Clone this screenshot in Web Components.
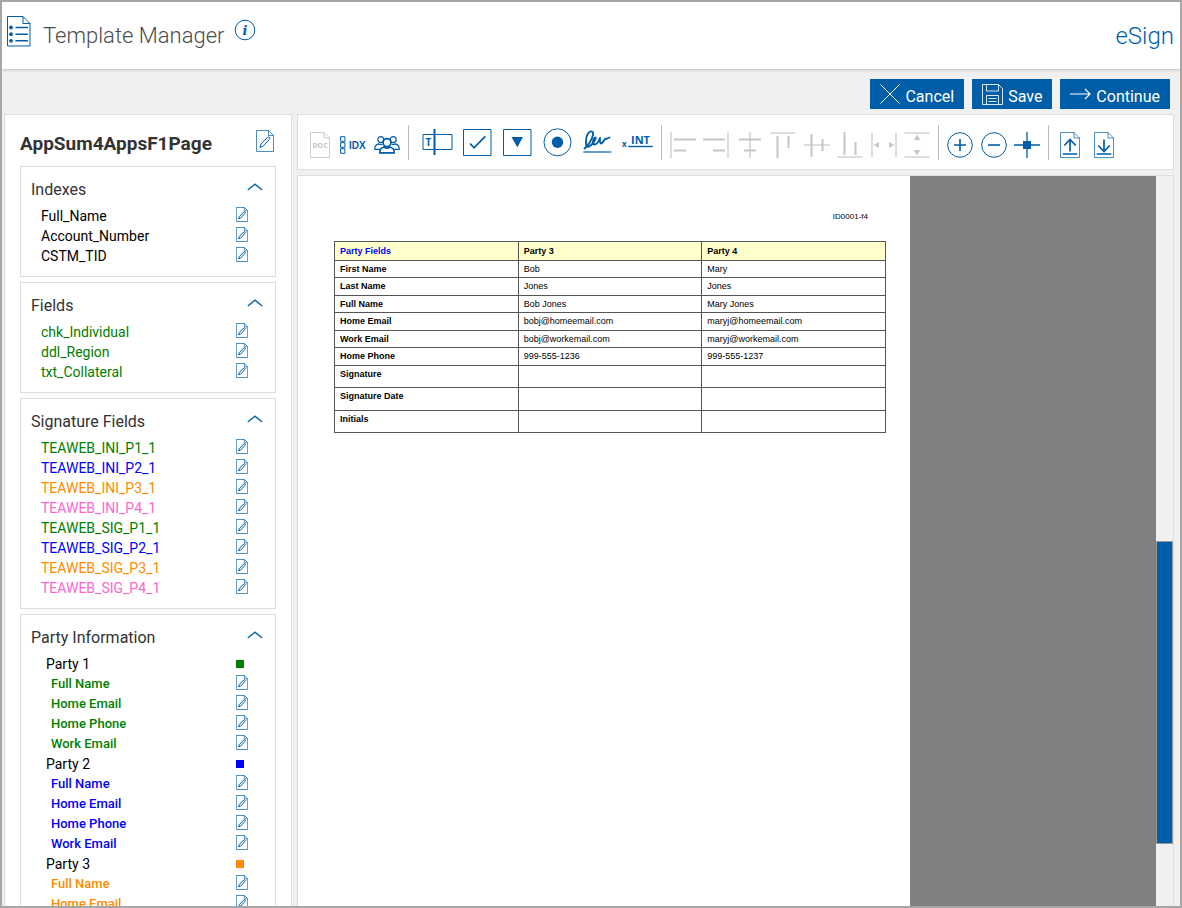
<!DOCTYPE html>
<html lang="en">
<head>
<meta charset="utf-8">
<title>Template Manager</title>
<style>
  body {
    margin: 0;
    font-family: Roboto, "Liberation Sans", sans-serif;
    font-size: 14px;
    color: #000;
  }
</style>
</head>
<body>
<es-app></es-app>

<script>
const BLUE = '#005da8'

// Page with a folded corner, shared by several icons.
const page = (x, y, w, h, f) => `<path d="M${x} ${y}h${w - f}l${f} ${f}v${h - f}h-${w}z M${x + w - f} ${y}v${f}h${f}"/>`

/**
 * Icons as [width, height, svg content].
 */
const icons = {
  list: [24, 31, `${page(0.5, 0.5, 22.5, 29.5, 7)}<path stroke-width="1.6" d="M8.5 11.5h12.5M8.5 18.2h12.5M8.5 24.8h12.5"/><g fill="currentColor" stroke="none"><circle cx="4" cy="11.5" r="1.9"/><circle cx="4" cy="18.2" r="1.9"/><circle cx="4" cy="24.8" r="1.9"/></g>`],
  info: [22, 22, '<circle cx="11" cy="11" r="9.8"/><text x="11" y="16" text-anchor="middle" style="font-family: DejaVu Serif, serif" font-style="italic" font-weight="700" font-size="13">i</text>'],
  edit: [18, 22, `<g stroke-opacity=".7">${page(0.5, 0.5, 17, 21, 5)}</g><path d="M4 17.5l1-3.500 6.500-6.700q1.200-.8 2 0t0 2l-6.500 7z"/>`],
  chevron: [16, 8, '<path stroke-width="1.3" d="M.8 7L8 1.200 15.200 7"/>'],
  cancel: [20, 20, '<path d="M.5 .5l19 19M19.500 .5l-19 19"/>'],
  save: [21, 21, '<path d="M.5 .5h16l4 4v16h-20z M4.500 .5v6.500h12v-6.500 M4.500 20v-8.500h12v8.500 M6.500 14.500h8M6.500 17.500h8" opacity=".85"/>'],
  arrow: [21, 12, '<path d="M0 6h20M15 1l5 5-5 5" stroke-width="1.2"/>'],

  doc: [26, 26, `<g stroke="#ccc">${page(3.5, 0.5, 19, 25, 5.5)}</g><text x="13" y="16" text-anchor="middle" style="fill: #c4c4c4" font-size="7" font-weight="700">DOC</text>`],
  idx: [26, 26, '<path d="M.6 4.700h4.300v4.600h-4.300z M.6 10.700h4.300v4.600h-4.300z M.6 16.700h4.300v4.600h-4.300z"/><text x="9" y="17" style="font-family: Liberation Sans, sans-serif" font-size="10" font-weight="700">IDX</text>'],
  group: [26, 26, '<g stroke-width="1.200"><circle cx="6.800" cy="7.600" r="3"/><circle cx="19.200" cy="7.600" r="3"/><path d="M6 17.300H.7c0-3.500 1.300-4.800 4-5.500 1 .8 2.500 1 3.700.4M20 17.300h5.300c0-3.500-1.300-4.800-4-5.500-1 .8-2.500 1-3.700.4"/></g><g stroke-width="1.700"><circle cx="13" cy="10.600" r="4"/><path d="M5.800 20.800c0-4 1.300-5 4.200-5.800 1.800 1.300 4.200 1.300 6 0 2.900.8 4.200 1.800 4.200 5.800z"/></g>'],
  text: [32, 32, '<path d="M2 8.500h29v15h-29z"/><path stroke-width="2" d="M13.500 3v26"/><text x="7.500" y="19.500" text-anchor="middle" font-size="10" font-weight="700">T</text>'],
  check: [32, 32, '<path d="M2.500 3.500h27.500v26h-27.500z"/><path stroke-width="1.800" d="M9 17.500l4 4.300 11.300-11.500"/>'],
  dropdown: [32, 32, '<path d="M2.500 3.500h27.500v26h-27.500z"/><path fill="currentColor" stroke="none" d="M10.500 11h11.500l-5.700 10.300z"/>'],
  radio: [32, 32, '<circle cx="16.500" cy="16.300" r="13.500"/><circle cx="16.500" cy="16.300" r="5.700" fill="currentColor" stroke="none"/>'],
  sign: [32, 32, '<path stroke-width="1.200" d="M2.300 26h28"/><path stroke-width="1.900" stroke-linecap="round" stroke-linejoin="round" d="M3.500 22.500C7 20 11.500 13 12 8.500C12.500 4.500 9 4.500 7 7.500C4.500 11 4.500 19 6 20.500C8 22 12.500 17 14 14C15.500 11.500 14.500 10.500 13 12.500C11.500 15 11.500 18.500 13.500 18.500C15.500 18.500 18 14.500 19 12C18.800 14.500 18.500 17 20 17.500C21.800 17.500 23 14 24 13C25 12.500 26 13 28.500 11.500"/>'],
  initial: [32, 32, '<path stroke-width="1.400" d="M7.300 20.500h24.400"/><text x="1" y="21" font-size="8" font-weight="700">x</text><text x="10" y="18" font-size="11" font-weight="700">INT</text>'],

  left: [26, 26, '<path d="M1 0v26" opacity=".6"/><path d="M4 7.500h22M4 18.500h12"/>'],
  right: [26, 26, '<path d="M25 0v26" opacity=".6"/><path d="M0 7.500h22M10 18.500h12"/>'],
  center: [26, 26, '<path d="M13 0v26" opacity=".6"/><path d="M2 7.500h22M7 18.500h12"/>'],
  top: [26, 26, '<path d="M.5 1h25" opacity=".6"/><path d="M7.500 4v22M18.500 4v12"/>'],
  middle: [26, 26, '<path d="M0 13h26" opacity=".6"/><path d="M7.500 2v23M18.500 7v12"/>'],
  bottom: [26, 26, '<path d="M.5 25h25" opacity=".6"/><path d="M7.500 0v23M18.500 10v13"/>'],
  spreadH: [26, 26, '<path d="M1 1v24M25 1v24" opacity=".6"/><path fill="currentColor" stroke="none" d="M2.500 13l5.500-3v6zM23.500 13l-5.500-3v6z"/>'],
  spreadV: [26, 26, '<path d="M.5 1h25M.5 25h25" opacity=".6"/><path fill="currentColor" stroke="none" d="M13 2.500l-3.200 5.500h6.400zM13 23.500l-3.200-5.500h6.400z"/>'],

  plus: [26, 26, '<circle cx="13" cy="13" r="12.300"/><path stroke-width="1.600" d="M7 13h12M13 7v12"/>'],
  minus: [26, 26, '<circle cx="13" cy="13" r="12.300"/><path stroke-width="1.600" d="M7 13h12"/>'],
  target: [26, 26, '<path stroke-width="1.300" d="M0 13h26M13 0v26"/><path fill="currentColor" stroke="none" d="M9 9h8v8h-8z"/>'],
  upload: [26, 26, `<g stroke-opacity=".7">${page(3.5, 0.5, 19, 25, 5.5)}</g><path stroke-width="1.700" d="M13 19.500v-12M7.300 13.500L13 7.500l5.700 6M5.700 22h14.600"/>`],
  download: [26, 26, `<g stroke-opacity=".7">${page(3.5, 0.5, 19, 25, 5.5)}</g><path stroke-width="1.700" d="M13 7.500v12M7.300 13.500l5.700 6 5.700-6M5.700 22h14.600"/>`]
}

/**
 * Creates a shadow root with the given markup.
 *
 * @param {HTMLElement} host - The custom element.
 * @param {string} html - Styles and markup.
 */
function render (host, html) {
  const template = document.createElement('template')
  template.innerHTML = html
  host.attachShadow({ mode: 'open' }).appendChild(template.content.cloneNode(true))
}

customElements.define('es-icon',
  /**
   * Represents a line icon. The optional size attribute is the width.
   */
  class extends HTMLElement {
    connectedCallback () {
      if (this.shadowRoot) return
      const [w, h, svg] = icons[this.getAttribute('name')]
      const width = Number(this.getAttribute('size')) || w
      render(this, `<style>
        :host { display: block; line-height: 0; }
        svg { display: block; fill: none; stroke: currentColor; }
        text { fill: currentColor; stroke: none; font-family: "Open Sans", sans-serif; }
      </style>
      <svg width="${width}" height="${Math.round(h * width / w)}" viewBox="0 0 ${w} ${h}" stroke-width="${this.getAttribute('weight') || 1}" aria-hidden="true">${svg}</svg>`)
    }
  }
)

customElements.define('es-header',
  /**
   * Represents the top bar.
   */
  class extends HTMLElement {
    connectedCallback () {
      render(this, `<style>
        :host {
          display: flex;
          align-items: center;
          height: 67px;
          padding: 0 6px 0 5px;
          box-sizing: border-box;
          background: #fff;
          box-shadow: 0 1px 3px #bbb;
        }
        .list { margin: 0 12px 8px 0; }
        h1 { margin: 0 10px 0 0; font-size: 22px; font-weight: 300; color: #4c4c4f; }
        button { margin: 0 0 12px; padding: 0; border: 0; background: none; color: ${BLUE}; }
        .brand { margin-left: auto; font-size: 24px; font-weight: 300; }
        es-icon, .brand { color: ${BLUE}; }
      </style>
      <es-icon class="list" name="list"></es-icon>
      <h1>Template Manager</h1>
      <button type="button" aria-label="Info"><es-icon name="info"></es-icon></button>
      <span class="brand">eSign</span>`)
    }
  }
)

customElements.define('es-action',
  /**
   * Represents a filled button with an icon.
   */
  class extends HTMLElement {
    connectedCallback () {
      render(this, `<style>
        :host { display: block; }
        button {
          display: flex;
          align-items: center;
          gap: 5px;
          height: 30px;
          padding: 0 10px;
          border: 0;
          background: ${BLUE};
          color: #fff;
          font: inherit;
          font-size: 16px;
        }
        span { padding-top: 4px; }
      </style>
      <button type="button"><es-icon name="${this.getAttribute('icon')}"></es-icon><span><slot></slot></span></button>`)
    }
  }
)

customElements.define('es-panel',
  /**
   * Represents a collapsible panel of the sidebar.
   */
  class extends HTMLElement {
    connectedCallback () {
      render(this, `<style>
        :host { display: block; padding-bottom: 10px; border: 1px solid #ddd; }
        header {
          display: flex;
          align-items: center;
          justify-content: space-between;
          height: 39px;
          padding: 0 12px 0 10px;
        }
        h3 { margin: 5px 0 0; font-size: 16px; font-weight: 400; color: #333; }
        button { padding: 0; border: 0; background: none; color: ${BLUE}; }
      </style>
      <header>
        <h3>${this.getAttribute('heading')}</h3>
        <button type="button" aria-label="Collapse"><es-icon name="chevron"></es-icon></button>
      </header>
      <slot></slot>`)
    }
  }
)

customElements.define('es-row',
  /**
   * Represents a named field. The kind is field, party or sub.
   */
  class extends HTMLElement {
    connectedCallback () {
      const color = this.getAttribute('color')
      const kind = this.getAttribute('kind') || 'field'
      const end = kind === 'party'
        ? '<i></i>'
        : '<button type="button" aria-label="Edit"><es-icon name="edit" size="12" weight="1.500"></es-icon></button>'
      render(this, `<style>
        :host { display: flex; height: 20px; line-height: 20px; padding-left: 20px; }
        :host([kind="party"]) { padding-left: 25px; }
        :host([kind="sub"]) { padding-left: 30px; font-size: 13px; font-weight: 500; }
        span { flex: 1; color: ${kind === 'party' ? '#000' : color}; }
        .end { display: flex; align-items: center; width: 39px; }
        i { width: 8px; height: 8px; background: ${color}; }
        button { margin-bottom: 3px; padding: 0; border: 0; background: none; color: ${BLUE}; }
      </style>
      <span><slot></slot></span><div class="end">${end}</div>`)
    }
  }
)

const colors = ['green', 'blue', 'darkorange', '#ff66cc']
const row = (name, color, kind = 'field') => `<es-row kind="${kind}" color="${color}">${name}</es-row>`
const party = (n, names) => row(`Party ${n}`, colors[n - 1], 'party') +
  names.map(name => row(name, colors[n - 1], 'sub')).join('')
const contact = ['Full Name', 'Home Email', 'Home Phone', 'Work Email']

customElements.define('es-sidebar',
  /**
   * Represents the list of everything placed on the template.
   */
  class extends HTMLElement {
    connectedCallback () {
      const signatures = ['INI', 'SIG'].map(type =>
        colors.map((color, i) => row(`TEAWEB_${type}_P${i + 1}_1`, color)).join('')).join('')
      render(this, `<style>
        :host {
          display: flex;
          flex-direction: column;
          gap: 5px;
          padding: 0 15px;
          overflow: hidden;
          border: 1px solid #ddd;
          border-bottom: 0;
          background: #fff;
        }
        header { display: flex; flex: none; align-items: center; justify-content: space-between; height: 46px; padding-right: 2px; }
        h2 { margin: 11px 0 0; font-size: 19px; font-weight: 700; color: #333; }
        button { margin-top: 6px; padding: 0; border: 0; background: none; color: ${BLUE}; }
        es-panel { flex: none; }
      </style>
      <header>
        <h2>AppSum4AppsF1Page</h2>
        <button type="button" aria-label="Edit"><es-icon name="edit"></es-icon></button>
      </header>
      <es-panel heading="Indexes">${['Full_Name', 'Account_Number', 'CSTM_TID'].map(name => row(name, '#000')).join('')}</es-panel>
      <es-panel heading="Fields">${['chk_Individual', 'ddl_Region', 'txt_Collateral'].map(name => row(name, 'green')).join('')}</es-panel>
      <es-panel heading="Signature Fields">${signatures}</es-panel>
      <es-panel heading="Party Information">${party(1, contact)}${party(2, contact)}${party(3, contact.slice(0, 2))}</es-panel>`)
    }
  }
)

customElements.define('es-tool',
  /**
   * Represents a tool button.
   */
  class extends HTMLElement {
    connectedCallback () {
      const name = this.getAttribute('icon')
      render(this, `<style>
        :host { display: inline-block; vertical-align: top; }
        button { display: block; padding: 0 2px; border: 0; background: none; color: inherit; }
      </style>
      <button type="button" aria-label="${name}"><es-icon name="${name}" weight="${this.getAttribute('weight') || 1}"></es-icon></button>`)
    }
  }
)

customElements.define('es-toolbar',
  /**
   * Represents the toolbar above the document.
   */
  class extends HTMLElement {
    connectedCallback () {
      const tools = (names, weight = 1) => names.split(' ').map(name => `<es-tool icon="${name}" weight="${weight}"></es-tool>`).join(' ')
      render(this, `<style>
        :host {
          display: flex;
          align-items: center;
          height: 54px;
          padding-left: 7px;
          border: 1px solid #ddd;
          background: #fff;
          color: ${BLUE};
          white-space: nowrap;
        }
        .small { padding-top: 6px; }
        .large { display: flex; gap: 4px; padding-left: 4px; }
        .off { color: #c6c6c6; }
        hr { width: 1px; height: 35px; margin: 0 6px; border: 0; background: #bbb; }
      </style>
      <div class="small">${tools('doc idx group')}</div><hr>
      <div class="large">${tools('text check dropdown radio sign initial')}</div><hr>
      <div class="small off">${tools('left right center top middle bottom spreadH spreadV', 2)}</div><hr>
      <div class="small">${tools('plus minus target')}</div><hr>
      <div class="small">${tools('upload download')}</div>`)
    }
  }
)

const rows = [
  ['First Name', 'Bob', 'Mary'],
  ['Last Name', 'Jones', 'Jones'],
  ['Full Name', 'Bob Jones', 'Mary Jones'],
  ['Home Email', 'bobj@homeemail.com', 'maryj@homeemail.com'],
  ['Work Email', 'bobj@workemail.com', 'maryj@workemail.com'],
  ['Home Phone', '999-555-1236', '999-555-1237'],
  ['Signature', '', ''],
  ['Signature Date', '', ''],
  ['Initials', '', '']
]

customElements.define('es-document',
  /**
   * Represents the document page on its grey surface, with a scroll bar.
   */
  class extends HTMLElement {
    connectedCallback () {
      render(this, `<style>
        :host { display: flex; min-height: 0; overflow: hidden; border: 1px solid #ddd; border-bottom: 0; background: #808080; }
        .page {
          width: 612px;
          height: 792px;
          padding: 36px 24px 0 36px;
          box-sizing: border-box;
          background: #fff;
          font-family: "Liberation Sans", Arial, sans-serif;
          font-size: 9px;
        }
        p { margin: 0 18px 19px 0; font-size: 8px; line-height: 10px; text-align: right; }
        table { width: 100%; table-layout: fixed; border-collapse: collapse; line-height: 10px; }
        th, td { padding: 3px 5px 0; border: 1px solid #555; text-align: left; vertical-align: top; box-sizing: border-box; }
        thead th { background: #ffffcc; padding-top: 4px; }
        thead th:first-child { color: blue; }
        tr:nth-child(even) { height: 18px; }
        tr:nth-child(odd) { height: 17px; }
        thead tr:nth-child(odd) { height: 19px; }
        tr.tall { height: 22px; }
        tr.tall:nth-child(even) { height: 23px; }
        .track { display: flex; flex-direction: column; width: 17px; margin-left: auto; background: #f0f0f0; }
        .before { flex: 366; }
        .thumb { flex: 302; box-sizing: border-box; border: 1px solid #999; background: ${BLUE}; }
        .after { flex: 62; }
      </style>
      <div class="page">
        <p>ID0001-f4</p>
        <table>
          <thead><tr><th>Party Fields</th><th>Party 3</th><th>Party 4</th></tr></thead>
          <tbody>${rows.map(([name, a, b]) => `<tr${a ? '' : ' class="tall"'}><th>${name}</th><td>${a}</td><td>${b}</td></tr>`).join('')}</tbody>
        </table>
      </div>
      <div class="track"><div class="before"></div><div class="thumb"></div><div class="after"></div></div>`)
    }
  }
)

customElements.define('es-app',
  /**
   * Represents the whole window.
   */
  class extends HTMLElement {
    connectedCallback () {
      render(this, `<style>
        :host {
          display: flex;
          flex-direction: column;
          height: 100vh;
          box-sizing: border-box;
          overflow: hidden;
          border: 2px solid #a6a6a6;
          background: #f0f0f0;
        }
        .actions { display: flex; justify-content: flex-end; gap: 8px; padding: 10px 10px 5px; }
        main { display: flex; flex: 1; min-height: 0; gap: 5px; padding: 0 6px 0 2px; }
        es-sidebar { flex: 0 0 256px; }
        .work { display: flex; flex: 1; flex-direction: column; gap: 5px; min-width: 0; }
        es-document { flex: 1; }
      </style>
      <es-header></es-header>
      <div class="actions">
        <es-action icon="cancel">Cancel</es-action>
        <es-action icon="save">Save</es-action>
        <es-action icon="arrow">Continue</es-action>
      </div>
      <main>
        <es-sidebar></es-sidebar>
        <div class="work">
          <es-toolbar></es-toolbar>
          <es-document></es-document>
        </div>
      </main>`)
    }
  }
)
</script>
</body>
</html>
